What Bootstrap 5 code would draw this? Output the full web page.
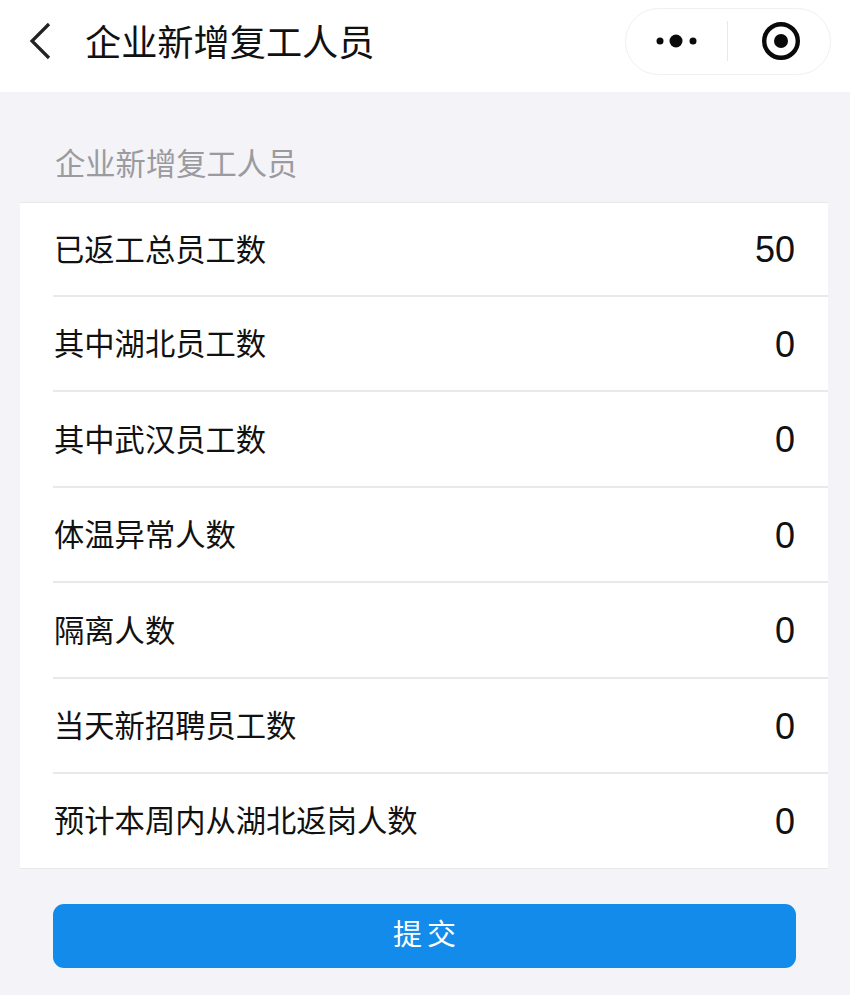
<!DOCTYPE html>
<html lang="zh-CN">
<head>
  <meta charset="UTF-8">
  <meta name="viewport" content="width=device-width, initial-scale=1">
  <title>企业新增复工人员</title>
  <link href="https://cdn.jsdelivr.net/npm/bootstrap@5.3.3/dist/css/bootstrap.min.css" rel="stylesheet">
  <style>
    body {
      background-color: #f3f3f8;
      color: #111;
      font-family: "Liberation Sans", "Noto Sans CJK SC", sans-serif;
      height: 995px;
      overflow: hidden;
    }

    .top-bar {
      height: 92px;
      padding: 0 19px 10px 28px;
    }

    .back-icon {
      width: 26px;
      height: 38px;
      margin-right: 31px;
    }

    .top-title {
      font-size: 36.2px;
      line-height: 1;
      margin: 6px 0 0;
      font-weight: 400;
    }

    .capsule {
      width: 206px;
      height: 67px;
      border: 1px solid #f0f0f2;
      border-radius: 34px;
    }

    .capsule-half {
      width: 101px;
    }

    .capsule-half-right {
      width: 102px;
      padding-left: 3px;
    }

    .capsule-line {
      width: 1px;
      height: 40px;
      background-color: #e8e8e8;
    }

    .section-title {
      padding: 57px 0 0 55px;
      height: 110px;
      font-size: 30.3px;
      line-height: 32px;
      color: #9b9b9f;
    }

    .form-box {
      margin: 0 22px 0 20px;
      background-color: #fff;
      border-top: 1px solid #e8e8ec;
      border-bottom: 1px solid #e8e8ec;
    }

    .form-row {
      height: 95.5px;
      margin-left: 33px;
      padding: 3px 33px 0 1px;
      border-bottom: 2px solid #e9e9ec;
      font-size: 30.3px;
    }

    .form-row:first-child {
      height: 93.5px;
    }

    .form-row:last-child {
      height: 93.5px;
      padding-top: 2px;
      border-bottom: 0;
    }

    .form-value {
      font-size: 36px;
    }

    .submit-wrap {
      padding: 35px 54px 0 53px;
    }

    .submit-btn {
      height: 64px;
      border-radius: 11px;
      border: 0;
      background-color: #128bea;
      color: #fff;
      font-size: 29px;
      word-spacing: -3px;
      padding: 0;
    }

    .submit-btn:hover {
      background-color: #128bea;
      color: #fff;
    }
  </style>
</head>
<body>

<header class="top-bar bg-white d-flex align-items-center">
  <svg class="back-icon" viewBox="0 0 26 38" fill="none" stroke="#222" stroke-width="3.2">
    <path d="M21 2 L4 19 L21 36"/>
  </svg>
  <h1 class="top-title flex-grow-1">企业新增复工人员</h1>
  <div class="capsule d-flex align-items-center">
    <div class="capsule-half d-flex justify-content-center">
      <svg width="42" height="14" viewBox="0 0 42 14" fill="#0a0a0a">
        <circle cx="4" cy="7" r="3.5"/>
        <circle cx="20" cy="7" r="6.5"/>
        <circle cx="37" cy="7" r="3.5"/>
      </svg>
    </div>
    <div class="capsule-line"></div>
    <div class="capsule-half capsule-half-right d-flex justify-content-center">
      <svg width="38" height="38" viewBox="0 0 38 38">
        <circle cx="19" cy="19" r="16.8" fill="none" stroke="#0a0a0a" stroke-width="4.4"/>
        <circle cx="19" cy="19" r="7" fill="#0a0a0a"/>
      </svg>
    </div>
  </div>
</header>

<div class="section-title">企业新增复工人员</div>

<div class="form-box">
  <div class="form-row d-flex justify-content-between align-items-center"><span>已返工总员工数</span><span class="form-value">50</span></div>
  <div class="form-row d-flex justify-content-between align-items-center"><span>其中湖北员工数</span><span class="form-value">0</span></div>
  <div class="form-row d-flex justify-content-between align-items-center"><span>其中武汉员工数</span><span class="form-value">0</span></div>
  <div class="form-row d-flex justify-content-between align-items-center"><span>体温异常人数</span><span class="form-value">0</span></div>
  <div class="form-row d-flex justify-content-between align-items-center"><span>隔离人数</span><span class="form-value">0</span></div>
  <div class="form-row d-flex justify-content-between align-items-center"><span>当天新招聘员工数</span><span class="form-value">0</span></div>
  <div class="form-row d-flex justify-content-between align-items-center"><span>预计本周内从湖北返岗人数</span><span class="form-value">0</span></div>
</div>

<div class="submit-wrap">
  <button type="button" class="btn submit-btn w-100">提 交</button>
</div>

<script src="https://cdn.jsdelivr.net/npm/bootstrap@5.3.3/dist/js/bootstrap.bundle.min.js"></script>
</body>
</html>
